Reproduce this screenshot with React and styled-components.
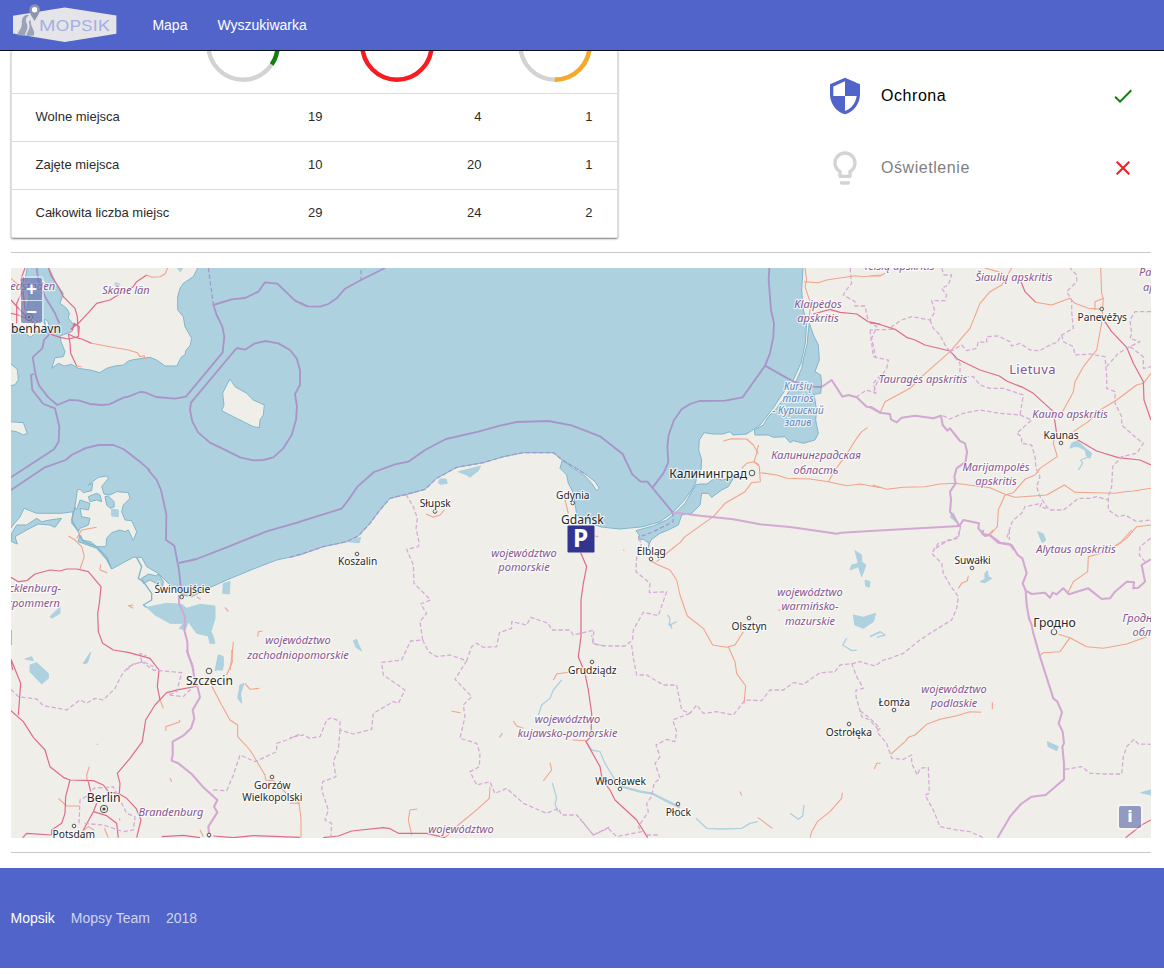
import React from 'react';
import styled, { createGlobalStyle } from 'styled-components';

const GlobalStyle = createGlobalStyle`
  *, *::before, *::after { box-sizing: border-box; }
  html, body { margin: 0; padding: 0; background: #fff; overflow: hidden; }
  body { font-family: "Liberation Sans", Arial, sans-serif; }
`;

const Page = styled.div`
  display: flex;
  flex-direction: column;
  height: 974px;
  overflow: hidden;
`;

const Header = styled.header`
  position: relative;
  z-index: 2;
  flex: none;
  display: flex;
  align-items: center;
  height: 51px;
  padding-left: 12px;
  background: #5164c9;
  border-bottom: 1px solid #0d0d14;
`;

const LogoSvg = styled.svg`
  display: block;
  width: 106px;
  height: 42px;
  margin: -5px 34.4px 0 0;
`;

const NavLink = styled.a`
  margin-right: 30px;
  color: #fff;
  font-size: 14px;
  line-height: 20px;
`;

const Content = styled.main`
  flex: none;
  width: 1140px;
  margin-left: 11px;
`;

const Details = styled.section`
  display: flex;
  justify-content: space-between;
  height: 201px;
`;

const Card = styled.div`
  width: 607px;
  height: 187px;
  border: 1px solid #dedede;
  border-top: 0;
  border-radius: 0 0 2px 2px;
  background: #fff;
  box-shadow: 0 1px 2px rgba(0, 0, 0, 0.5);
`;

const Row = styled.div`
  display: grid;
  grid-template-columns: 171px 116px 159px 111px;
  align-items: ${(p) => (p.$chart ? 'end' : 'center')};
  height: ${(p) => (p.$chart ? 42 : 48)}px;
  padding: 0 23px ${(p) => (p.$chart ? 12 : 2)}px 23.500px;
  border-top: ${(p) => (p.$chart ? 0 : '1px solid #dcdcdc')};
  color: #2b2b2b;
  font-size: 13px;
`;

const Value = styled.span`
  text-align: right;
`;

const RingCell = styled.div`
  display: flex;
  align-items: flex-end;
  justify-content: flex-end;
  height: 30px;
  padding-right: ${(p) => p.$inset}px;
`;

const RingSvg = styled.svg`
  flex: none;
  width: 74px;
  height: 74px;
  margin-bottom: -0.6px;
`;

const Features = styled.div`
  width: 340px;
  padding-top: 9px;
`;

const Feature = styled.div`
  display: flex;
  align-items: center;
  height: 72px;
  padding: 0 16.5px 0 13.5px;
  color: ${(p) => (p.$on ? '#000' : '#808080')};
  font-size: 16px;
  letter-spacing: 0.56px;
`;

const FeatureName = styled.span`
  flex: 1;
  margin-left: 16.5px;
`;

const Icon = styled.svg`
  display: block;
  width: ${(p) => p.$size}px;
  height: ${(p) => p.$size}px;
  fill: ${(p) => p.$color};
`;

const Rule = styled.hr`
  height: 1px;
  margin: 0;
  border: 0;
  background: #c9c9c9;
`;

const MapFrame = styled.section`
  position: relative;
  height: 570px;
  margin: 15px 0 14px;
  overflow: hidden;
`;

const MapSvg = styled.svg`
  display: block;
  width: 1140px;
  height: 570px;
  background: #f0eee9;
  font-family: "Noto Sans", "Open Sans", sans-serif;
`;

const Control = styled.div`
  position: absolute;
  display: flex;
  flex-direction: column;
  gap: 1px;
  padding: 2px;
  border-radius: 4px;
  background: rgba(255, 255, 255, 0.4);
  ${(p) => (p.$corner === 'top' ? 'left: 8px; top: 8px;' : 'right: 8px; bottom: 8px;')}
`;

const ControlButton = styled.button`
  width: ${(p) => p.$w || 21}px;
  height: 22px;
  padding: 0;
  border: 0;
  border-radius: ${(p) => p.$radius || '2px'};
  background: rgba(48, 63, 145, 0.5);
  color: #fff;
  font: bold ${(p) => (p.$font ? 16 : 18)}px/20px ${(p) => p.$font || '"Liberation Sans"'}, sans-serif;
`;

const Footer = styled.footer`
  flex: none;
  display: flex;
  align-items: center;
  gap: 16px;
  height: 100px;
  margin-top: 15px;
  padding-left: 10.5px;
  background: #5164c9;
  color: #d0d4ee;
  font-size: 14px;
`;

const FooterBrand = styled.span`
  color: #fff;
`;

const Land = styled.polygon`
  fill: #f0eee9;
  stroke: #82b6cb;
  stroke-width: 3;
`;
const Water = styled.polygon`
  fill: #add1df;
  stroke: ${(p) => (p.$shore ? '#7fb5ca' : '#add1df')};
  stroke-width: 3;
`;
const Line = styled.polyline`
  fill: none;
  stroke-linejoin: round;
`;
const River = styled(Line)`
  stroke: #add1df;
  stroke-width: ${(p) => p.$w || 4};
`;
const Motorway = styled(Line)`
  stroke: #df6b8b;
  stroke-width: 3.6;
`;
const Trunk = styled(Line)`
  stroke: #f1a389;
  stroke-width: 3.2;
`;
const SeaBorder = styled(Line)`
  stroke: #a994c9;
  stroke-width: 5.5;
`;
const LandBorder = styled(Line)`
  stroke: #d3a8d2;
  stroke-width: 6.2;
`;
const Region = styled(Line)`
  stroke: #d5aad7;
  stroke-width: 3.8;
  stroke-dasharray: 13 7;
`;

const MapText = styled.text`
  paint-order: stroke;
  stroke: rgba(255, 255, 255, 0.7);
  stroke-width: 2.4px;
  stroke-linejoin: round;
  text-anchor: ${(p) => p.$anchor || 'middle'};
  font-size: ${(p) => p.$size}px;
  font-style: ${(p) => (p.$italic ? 'italic' : 'normal')};
  fill: ${(p) => p.$color};
`;

const Town = styled.circle`
  fill: #f3f1ec;
  stroke: #555;
  stroke-width: 1;
`;

const PinLetter = styled.text`
  font: bold 24.5px "Noto Sans", "Open Sans", sans-serif;
  text-anchor: middle;
  fill: #fff;
`;

const LogoText = styled.text`
  font-family: Inter, Roboto, sans-serif;
  font-size: 14px;
  font-weight: 400;
  fill: #a3b1e2;
`;

const SEA =
  'M11 268H803L801.7 290L803.3 310L806.7 322L805.3 343L801 363L793.3 380L781.7 395L773.3 408L760 425L746.7 434L733 435L730 431.7L723 434L713 434L704 432.7L699.3 440L698.7 450L701.7 460L701 470L696.7 477L695.7 482.7L691.7 490L683 501.7L672.7 512.7L660 521.7L643 526.7L620 529L610 528L600 526.7L591.7 523.3L576.7 515L575 503L572.7 491.7L568.3 483.3L566.7 475L560 468.3L562.3 460L553.3 452.7L523.3 452.7L503.3 456.7L483.3 462.7L456.7 467.3L436.7 478.3L425 489.3L411.7 493.3L390 498.3L380 510L370 523.3L358.3 536L346.7 541.7L323.3 546.7L300 555L276.7 560L253.3 569L226.7 580L206.7 589L191.7 596.7L181.7 595L170 585L158.3 573.3L146.7 566.7L141.7 557.3L133.3 557.3L123.3 562.7L111.7 569L106.7 560L96.7 548.3L78.3 541.7L80 533.3L71.7 523.3L73 511.7L61.7 513.3L36.7 513.3L24 508.3L20 517L13 525L11 528Z';

const TILES = [
  {
    x: 0, y: 260,
    land: [
      '145,20 168,70 190,100 180,130 200,145 208,160 205,175 222,195 215,215 180,228 183,245 195,275 190,290 165,293 160,310 155,325 175,310 193,318 215,313 235,325 270,330 300,338 320,325 345,318 370,315 385,303 400,299 450,292 470,300 495,318 530,318 545,290 555,285 558,270 570,258 575,235 555,200 550,170 533,150 533,110 540,85 550,70 580,50 595,20',
      '30,20 82,20 75,60 88,110 80,150 110,185 125,180 140,200 110,215 92,232 70,215 30,195',
      '133,178 143,182 150,205 170,215 150,218 138,205',
      '30,310 52,328 55,360 45,374 30,378',
      '30,485 70,488 82,520 70,525 50,515 30,512',
      '690,357 705,380 740,400 760,420 793,435 790,465 780,480 778,503 760,500 700,470 665,452 672,435 668,400 680,375',
    ],
    water: ['533,24 548,24 541,36', '345,68 360,72 358,80 345,78'],
    red: [
      '145,24 155,50 172,75 190,110 225,145 232,170 235,220', '212,208 240,185 268,155 290,130 330,120 370,95 400,80 410,65 440,45',
      '205,222 225,232 245,237 275,250', '205,222 210,250 212,280 230,318', '130,215 180,232 205,237 235,230 238,200 222,190 217,212',
      '75,24 62,60 65,100 50,130 50,190', '33,120 60,150 90,180 100,190', '70,50 70,100 75,150', '33,160 55,165 110,190',
    ],
    orange: ['440,45 455,52 480,50 495,42 503,24', '275,250 330,260 385,270 412,278 420,290 433,287 433,297', '230,318 245,321', '33,55 60,80 62,100'],
    sea: [
      '110,24 115,60 135,110 165,160 178,190', '155,215 132,240 127,265 98,292 108,350 118,378 145,412 172,435 208,420 235,421 270,432 305,435 328,433 370,413 385,410 420,396 435,397 468,411 525,416 558,410 668,277 673,230 667,200 650,165 640,135 695,118 735,114 775,95 795,67 832,71 885,122 922,139',
      '102,342 93,345 97,390 130,432 165,445 178,500 176,545 162,568 33,652',
      '33,690 135,622 197,600 215,585 255,565 295,555 340,555 370,567 420,605 450,632',
      '710,264 735,269 765,250 797,243 835,250 870,270 890,295 900,330 900,375 885,402 891,440 888,480 875,525 850,565 820,592 790,600 760,601 720,592 680,572 630,548 595,518 577,485 570,450 573,428 710,264',
    ],
    seaDash: ['625,24 640,135'],
  },
  {
    x: 300, y: 260,
    sea: [
      '0,128 22,139 60,140 85,132 112,113 134,87 183,60 255,24',
      '0,785 125,746 145,720 172,680 222,636 285,613 325,605 375,570 438,537 535,515 600,497 650,486 745,483 815,496 902,530',
    ],
    seaDash: ['183,30 183,60'],
  },
  {
    x: 600, y: 260,
    shore: [
      '628,190 640,225 655,255 658,300 645,335 662,345 665,370 662,400 642,403 650,450 647,480 655,520 645,540 610,550 580,542 570,548 555,530 520,532 505,525 465,525 463,510 490,495 505,470 530,445 560,405 590,360 605,325 612,290 622,250 624,220',
      '287,675 300,672 320,672 345,655 365,660 400,655 385,680 365,690 335,712 325,700 305,700 300,735 275,760 245,765 235,795 200,812 180,820 155,838 148,850 130,838 115,838 118,825 108,812 160,798 200,780 225,760 255,730',
    ],
    red: ['640,162 690,148 720,157 770,162 805,185 842,193'],
    orange: [
      '615,24 620,60 615,80 625,110 632,130 628,170', '612,65 655,68 680,60 765,47 790,50 842,45', '370,543 395,536 440,537 460,555 472,575 462,605',
      '476,555 470,575 475,580', '462,605 478,620 481,665 455,668 435,695 375,730 340,770 255,830 240,848 212,870', '481,638 530,645 560,655 630,657 685,665 740,677 780,672 842,683',
      '685,665 705,630 735,590 770,535 785,515 803,503', '425,625 440,610 462,605 478,615',
    ],
    region: ['750,24 755,70 735,95 730,105 765,125 765,138 795,138 805,185 830,200 815,235 828,295', '842,345 820,370 828,400 800,390 770,410'],
    seaDash: ['218,757 220,785 160,815 115,832'],
    sea: ['0,529 68,582 97,643 122,665 142,665 218,757', '158,682 190,640 205,607 202,560 206,525 222,480 245,448 270,432 298,423 375,422 428,412 495,317 510,280 520,230 522,190 513,150 506,60 508,24', '495,317 580,365 640,380 665,381'],
    border: ['665,381 695,360 727,410 745,405 770,412 800,440 815,442 842,459', '218,757 300,767 400,778 480,793 570,801 680,817 710,821 725,818 812,813'],
  },
  {
    x: 870, y: 260,
    water: ['600,565 605,550 620,543 630,550 650,568 665,580 660,595 650,588 645,570 625,560 610,560', '503,815 520,822 527,840 518,848', '240,770 250,758 262,790'],
    river: ['658,590 632,600 638,610 625,630'],
    red: ['0,188 25,192 75,208 110,232 135,240 165,255 240,273 262,297 330,330 388,348 410,363 460,383 490,400 550,455 560,520', '453,65 465,95 497,127', '698,175 725,215 770,262 790,310 820,365 822,420 843,480', '620,538 680,573 745,593 810,600 843,615'],
    orange: [
      '30,460 45,425 120,385 155,350 240,275 300,205 330,130 360,95 395,75 425,24', '345,24 400,40', '0,48 30,48 45,40', '497,127 545,135 600,115 615,130 655,145 695,148',
      '692,24 695,100 700,115 675,125 675,150', '700,115 695,190 680,270 640,320 615,365 610,395 600,415 575,460', '843,340 820,370 800,375 740,420 690,450 655,485 610,515',
      '555,520 550,550 562,590 510,625 495,645 465,658 430,698 405,705 385,750 382,800 362,822', '8,675 50,688 100,682 165,680 210,672 255,670 360,683 405,703 435,712 530,705 583,675 615,697 735,700 765,695 790,693 843,685', '843,795 800,800 770,835 735,858',
    ],
    region: [
      '215,24 222,45 245,45 235,75 215,85 230,105 225,122 185,122 195,155 180,180 125,170 95,180 65,200 70,208 0,210', '180,180 190,205 210,225 225,255 240,275',
      '240,275 275,255 290,272 320,265 325,245 350,248 350,230 385,228 420,245 425,258 450,250 480,270 510,272 530,260 565,245 565,240 575,225 610,205 605,155 605,120 590,95 620,65 620,45 600,24',
      '575,225 580,245 610,260 615,285 660,282 705,290 710,350 710,385 735,395 735,430 755,470 755,495 800,535 820,550 800,580 755,590 728,620 725,680 715,710 715,750 745,770 765,765 800,785 843,780',
      '240,275 270,310 270,350 310,350 330,375 360,385 400,385 460,405 450,465 390,460 330,450 280,460 240,477 215,465', '450,465 485,480 440,520 455,530 455,550 485,555 495,590 498,625 510,650 500,680 510,710 530,740 540,750 580,750 600,735 625,715 660,715 680,710 715,720',
      '530,745 510,740 515,730 465,740 455,760 430,780 425,790 410,835', '843,155 795,155 780,180 785,220 780,235 810,245 780,260 745,280 710,320', '780,260 820,290 820,325 843,320', '0,210 10,290 55,300 50,325 20,370 10,400', '272,798 265,835 235,840 190,870',
    ],
    border: ['0,813 270,798', '0,441 30,458 60,462 63,478 80,487 95,473 135,467 190,475 213,467 218,495 232,512 240,505 270,543 285,550 291,575 287,605 260,625 253,650 257,670 240,695 243,720 240,755 255,775 268,798 280,780 327,790 325,805 345,828 360,825 390,848 420,853 432,870'],
  },
  {
    x: 0, y: 470,
    land: ['295,22 320,18 325,25 305,50 312,72 330,75 350,65 385,68 390,85 370,105 365,125 375,150 395,152 410,185 400,212 385,180 375,185 360,180 335,188 320,205 318,230 290,230 272,215 245,210 235,185 240,175 265,165 270,145 245,140 240,115 265,120 270,100 240,90 230,120 225,110 232,60 240,58 250,68 275,62 278,40 265,45'],
    water: ['335,117 355,120 355,140 335,138', '150,440 180,410 180,430 155,445', '250,580 272,547 260,580', '655,555 670,560 668,600 650,600', '670,340 690,335 688,372 668,370',
      '440,412 500,400 545,403 560,415 600,403 645,408 645,445 633,485 640,500 645,520 630,520 625,498 590,490 565,455 555,480 538,475 550,460 510,460 465,435'],
    shore: ['315,80 325,78 342,95 343,110 330,115 320,105', '35,190 50,165 80,165 110,145 125,155 150,150 185,145 165,172 150,165 115,162 80,180 45,200 52,222 35,215', '425,325 445,312 470,318 475,310 490,335 488,350 468,340 450,330 430,340', '290,70 300,75 305,95 290,90 270,95 265,80'],
    coast: ['410,262 425,290 415,325 430,335 455,370 455,390 430,405 440,412', '240,195 250,215 290,230 320,262 335,297', '225,110 215,150 235,185'],
    red: ['33,322 55,335 80,332 105,312 150,300 180,303 200,297 230,297 265,305 303,350 298,400 293,430 295,485 308,520 340,540 385,547 450,565 477,600', '33,480 33,525', '33,570 38,600'],
    orange: ['240,297 253,260 245,230 225,210 205,198', '230,205 245,180 290,172', '302,283 300,300 322,308', '400,405 385,407 400,415', '675,412 685,425', '773,500 775,485 788,483', '700,515 697,550 690,600', '590,380 602,388'],
    sea: ['445,0 470,30 483,60 499,133 498,210 523,227 537,300 545,375', '537,279 590,267 680,232 800,184 902,155'],
    border: ['537,375 537,400 555,440 553,480 562,515 563,550 578,590 580,602'],
    region: ['380,600 400,582 430,575 460,590'],
  },
  {
    x: 0, y: 650,
    water: ['90,45 110,38 145,70 145,85 125,102 90,65', '75,27 95,20 100,32', '250,40 272,8 262,38', '655,15 668,20 670,50 645,62', '720,105 732,100 722,130 725,160 713,145'],
    red: ['477,60 472,110 480,150', '595,108 540,118 500,128 465,165 437,210 427,275 390,325 352,370 360,400 358,430', '33,28 62,100 55,195', '33,182 70,215 100,262 135,300 150,350 190,382 210,390 280,392 310,405 325,425 358,432 380,445 408,475 423,510 410,563', '210,390 197,440 195,490 185,520 155,540 155,555', '68,563 80,550 155,555', '265,395 272,425', '290,460 280,485 250,540', '280,485 320,497 350,520 355,563', '485,560 550,556 600,563', '640,558 700,563 760,557 900,562'],
    orange: ['480,150 490,175', '268,350 260,375 262,395', '175,445 200,468 237,468', '282,540 265,530 245,545', '498,243 497,230 540,215 538,210', '510,385 515,395', '695,0 697,35 680,75', '635,108 665,165 690,210 713,225 713,260 750,300 765,325 795,375 797,390 820,392 880,450 900,460', '735,100 750,118 778,115', '600,540 610,560', '313,535 325,563', '358,505 360,512', '292,281 292,285'],
    region: ['33,118 55,140 110,147 130,167 200,180 240,150 260,160 285,145 310,150 345,115 365,75 385,50 425,35 460,60 545,68 530,125 505,135 550,140 575,115', '425,35 420,10 440,18', '640,420 680,422 700,375 720,315 765,335 830,305 830,280 860,270 900,252', '237,520 240,450 275,430 280,415 340,410 350,430 380,490 405,500 400,540 370,545 310,525 250,520'],
    border: ['560,0 578,50 583,85 592,108 600,142 578,180 583,205 573,235 550,257 518,275 518,315 515,332 535,340 575,372 610,412 652,450 642,470 652,487 625,530 628,563'],
  },
  {
    x: 290, y: 450,
    land: ['817,30 850,50 890,75 915,95 928,115 920,122 905,100 885,78 850,55'],
    water: ['505,65 572,48 565,62 540,82 530,75', '445,98 450,87 468,87 472,100 450,103', '172,275 212,262 208,278', '190,572 200,568 205,583 215,603 198,592'],
    river: ['815,690 790,720 780,745 755,765 745,795', '888,875 905,900 930,905 945,940 960,965', '787,998 800,1045 795,1060 803,1085'],
    red: ['872,308 890,350 880,400 873,450 873,560 865,620 885,670 895,720 905,790 903,860 888,875 930,950 937,990 960,1020', '100,1163 145,1158 185,1143 280,1133 300,1136 325,1150 410,1150 465,1163'],
    orange: ['408,192 430,202 450,195 463,180', '825,150 835,190', '790,690 800,672 835,667', '485,784 512,788', '670,813 680,828 700,835', '637,850 628,862', '780,938 785,960 760,993', '848,870 888,872', '0,1060 27,1060 33,1105 33,1163', '382,1077 360,1080 355,1110 365,1155', '600,1010 598,1045 565,1075 505,1125 465,1163', '915,258 925,260'],
    seaDash: ['0,322 40,310 100,290 170,275 205,258 240,220 270,180 300,145 348,133 405,118 440,85 500,52 580,38 640,20 700,8 790,8 817,30 890,75'],
    region: [
      '348,133 370,170 382,205 378,235 388,280 385,290 350,298 370,345 372,400 422,450 392,462 410,490 390,515 398,570 362,573 335,630 275,637 280,675 345,720 325,760 310,755 250,790 245,838 190,852 150,840 150,815 125,803 110,810 90,860 60,865 40,855 0,863',
      '398,570 415,605 440,620 480,615 530,632 545,590 560,580 580,592 620,590 628,548 665,535 665,515 710,525 722,502 775,520 785,540 840,540 850,555 912,540 908,580 950,590',
      '530,632 495,688 545,740 520,765 525,800 510,865 560,880 570,910 568,950 540,965 560,1005 600,995 615,1030 650,1015 700,1060 770,1090 805,1075 815,1095 860,1095 910,1155 960,1130',
      '150,840 145,900 130,935 138,980 98,995 95,1020 115,1080 105,1110 125,1120 123,1163',
    ],
  },
  {
    x: 580, y: 530,
    water: ['825,62 845,75 845,95 858,105 845,140 835,110 810,120 815,105 835,100', '855,150 870,155 868,172 857,168', '820,255 850,262 887,250 880,275 850,295 825,285', '265,283 275,283 273,290'],
    river: ['262,255 270,265 268,280 276,296', '272,284 290,275', '800,325 788,345 815,362 830,360', '630,850 655,868 668,858 672,825', '90,725 105,750', '348,865 380,895 420,897 485,895 510,880 533,875', '870,320 900,307'],
    wide: ['120,768 180,785 215,790 250,808 300,832'],
    red: ['90,780 105,810 170,870 203,923'],
    orange: ['272,60 230,95', '212,92 235,105 270,120 290,150 300,195 322,258 370,295 398,345 440,352 465,345 490,305', '445,350 465,395 470,430 497,468 492,520', '595,240 602,240', '480,785 485,797', '533,862 577,895', '690,923 695,905 712,875 750,845 785,805 787,788', '130,60 133,62'],
    coast: ['205,55 208,38'],
    region: [
      '175,25 185,40 170,80 168,125 210,160 208,188 260,185 235,257 190,247 160,300 158,330 135,348 80,348 40,342 35,315',
      '155,345 160,385 170,435 200,435 250,465 290,465 305,540 330,550 350,525 370,550 410,545 460,555 495,510 545,512 570,480 610,480 640,458 670,463 720,428 765,425 780,405 820,400 840,395',
      '330,550 278,570 290,605 285,635 260,628 228,645 240,680 225,700 240,745 222,760 215,800 200,820 205,845 175,890 185,905 110,920 85,895 40,915 0,865',
      '815,400 830,440 850,475 828,480 828,500 845,560 870,570 900,605', '200,915 240,915',
    ],
  },
  {
    x: 860, y: 530,
    water: ['535,8 548,15 556,30 545,35', '375,130 382,122 385,140 395,145 375,158 360,155 375,148', '562,635 595,650 590,662 565,650', '842,788 872,780 872,795'],
    river: ['30,320 60,305 75,315 50,322'],
    red: ['797,923 845,885 872,870'],
    orange: ['400,0 388,12', '815,0 780,40 740,65 685,80 683,125 640,155 623,190', '595,313 630,323 680,350 730,355 800,342 860,320', '630,323 600,365 550,368 537,380', '325,137 322,152 305,160 295,175', '92,673 135,635 145,622 165,615 200,583 240,568 290,557 330,545 363,547', '397,517 397,538', '43,717 50,700 62,700'],
    region: [
      '300,0 290,22 275,30 235,40 215,70 245,100 250,130 270,165 295,200 290,235 275,270 210,310 180,330 130,370 90,385 70,390 45,408 0,395',
      '0,542 30,565 60,595 50,605 80,640 95,685 130,688 155,675 155,700 172,735 180,715 205,712 208,790 195,795 220,840 240,890 290,900 330,905 368,922',
      '615,718 665,710 690,730 740,732 785,732 790,680 800,650 822,628 835,642 872,643', '872,25 840,50 838,75 855,95', '448,0 448,30',
    ],
    border: ['370,0 367,12 388,15 415,38 455,45 473,75 487,85 500,130 488,160 497,182', '497,182 515,192 555,188 570,203 578,188 590,193 610,175 627,193 685,175 700,187 725,207 750,205 765,185 800,155 822,157 820,175 835,173 855,155 845,105 872,88', '497,182 500,225 507,265 515,285 520,310 540,380 580,505 592,515 606,547 596,580 608,605 612,640 607,650 612,700 612,748 557,795 515,800 483,822 450,860 413,923'],
  },
];

const PURPLE = '#86578f';
const INK = '#282828';

const REGIONS = [
  ['Skåne län', 126, 294], ['Klaipėdos', 818, 308], ['apskritis', 818, 322], ['Telšių apskritis', 899, 270],
  ['Šiaulių apskritis', 1014, 281], ['Tauragės apskritis', 923, 383], ['Kauno apskritis', 1070, 418],
  ['Marijampolės', 996, 471], ['apskritis', 996, 485], ['Калининградская', 816, 459], ['область', 816, 474],
  ['Alytaus apskritis', 1076, 553], ['województwo', 524, 557], ['pomorskie', 524, 571],
  ['województwo', 298, 644], ['zachodniopomorskie', 298, 659], ['województwo', 567.5, 723],
  ['kujawsko-pomorskie', 567.5, 737], ['województwo', 810, 596], ['warmińsko-', 810, 610], ['mazurskie', 810, 625],
  ['województwo', 954, 693], ['podlaskie', 954, 707], ['województwo', 461, 833], ['Brandenburg', 171, 816],
  ['Hovedstaden', 55, 290, 'end'], ['Panevėžio', 1139, 276, 'start'], ['apskritis', 1143, 291, 'start'],
  ['Гродненская', 1122.5, 622, 'start'], ['область', 1132.5, 636, 'start'],
  ['Mecklenburg-', 61, 592, 'end'], ['Vorpommern', 60, 607, 'end'],
];

const CITIES = [
  ['København', 61, 333, 12.2, 'end'], ['Калининград', 708.2, 478, 12.1], ['Gdańsk', 582.4, 524, 12.1], ['Szczecin', 209.4, 685, 12.1],
  ['Гродно', 1054.4, 627, 12.2], ['Berlin', 103.7, 802, 12.2], ['Panevėžys', 1102.3, 321], ['Kaunas', 1061, 439],
  ['Gdynia', 572.8, 499], ['Elbląg', 651.3, 555], ['Słupsk', 435.2, 507], ['Koszalin', 357.6, 565], ['Świnoujście', 182.3, 593],
  ['Grudziądz', 592.3, 674], ['Olsztyn', 749.2, 630], ['Ostrołęka', 848.8, 736], ['Łomża', 894.2, 706], ['Suwałki', 972.6, 564],
  ['Potsdam', 73.8, 838], ['Gorzów', 272.3, 789], ['Wielkopolski', 272.3, 801], ['Włocławek', 620.5, 785], ['Płock', 678.3, 816],
];

const LAGOON = [['Kuršių', 798, 389.5], ['marios', 798, 402], ['- Куршский', 798, 414], ['залив', 798, 426]];

const TOWNS = [
  [1101.7, 309], [1061, 443], [572.7, 503], [651, 559], [435, 511.5], [357, 554], [181.7, 597], [592, 662], [749, 618],
  [849, 724], [894, 710], [972, 568], [74, 826], [272, 777], [620, 789], [678, 804], [752, 473, 2.8], [209, 671, 2.8],
  [1054, 632, 2.8], [209, 835],
];

const draw = (Shape, list, extra) => (list || []).map((points) => <Shape key={points} points={points} {...extra} />);

const Tile = ({ tile }) => (
  <g transform={`translate(${tile.x} ${tile.y}) scale(0.33333)`}>
    {draw(Land, tile.land)}
    {draw(Water, tile.water)}
    {draw(Water, tile.shore, { $shore: true })}
    {draw(River, tile.river)}
    {draw(River, tile.wide, { $w: 7 })}
    {draw(River, tile.coast, { style: { stroke: '#7fb5ca' } })}
    {draw(Trunk, tile.orange)}
    {draw(Motorway, tile.red)}
    {draw(Region, tile.region)}
    {draw(Region, tile.seaDash, { style: { stroke: '#a398cb' } })}
    {draw(LandBorder, tile.border)}
    {draw(SeaBorder, tile.sea)}
  </g>
);

const BalticMap = () => (
  <MapSvg viewBox="11 268 1140 570">
    <path d={SEA} fill="#add1df" />
    <path d={SEA.replace('M11 268H803L', 'M803 268L').replace('Z', '')} fill="none" stroke="#82b6cb" strokeWidth="1" />
    {TILES.map((tile) => <Tile key={`${tile.x}-${tile.y}`} tile={tile} />)}
    {TOWNS.map(([x, y, r]) => <Town key={`${x}-${y}`} cx={x} cy={y} r={r || 1.8} />)}
    <Town cx="29" cy="317" r="3.5" />
    <circle cx="29" cy="317" r="1.5" fill="#444" />
    <Town cx="104" cy="809" r="3.7" />
    <circle cx="104" cy="809" r="1.6" fill="#444" />
    {REGIONS.map(([t, x, y, a]) => (
      <MapText key={t + x + y} x={x} y={y} $size={11} $italic $anchor={a} $color={PURPLE}>{t}</MapText>
    ))}
    {LAGOON.map(([t, x, y]) => (
      <MapText key={t} x={x} y={y} $size={10} $italic $color="#6385b8">{t}</MapText>
    ))}
    {CITIES.map(([t, x, y, s, a]) => (
      <MapText key={t} x={x} y={y} $size={s || 10.2} $anchor={a} $color={INK}>{t}</MapText>
    ))}
    <MapText x="1032.5" y="373.5" $size={13} $color={PURPLE} letterSpacing="0.35">Lietuva</MapText>
    <rect x="567.5" y="525.5" width="27" height="27" rx="1" fill="#333390" />
    <PinLetter x="580.7" y="547.4">P</PinLetter>
  </MapSvg>
);

const Logo = () => (
  <LogoSvg viewBox="12 2 106 42">
    <path d="M13 15.7L64.7 7.4L116.4 15.4V33.7L64.7 42L13 33.4Z" fill="#e5e5e9" />
    <path d="M25.5 15C20.5 18 22.5 22 21.5 26C21 29.5 17.5 32 17.5 35L24.5 36C26 31 29 28 26.5 23C25 20 26 17 29.5 15Z" fill="#9ba2b8" />
    <path d="M30.5 20C27.5 21 30 24 29.5 27C29 31 26 33 26.5 36L34 35.5C35 31 32 28 31 24Z" fill="#9ba2b8" />
    <path d="M34.6 21C32 16.500 29.300 13.500 29.300 9.500A5.300 5.300 0 0 1 39.900 9.500C39.900 13.500 37 16.500 34.600 21Z" fill="#8c95ac" />
    <circle cx="34.600" cy="9.700" r="2.700" fill="#fff" />
    <LogoText x="39" y="31" textLength="71" lengthAdjust="spacingAndGlyphs">MOPSIK</LogoText>
  </LogoSvg>
);

const RADIUS = 34.7;
const LENGTH = 2 * Math.PI * RADIUS;

const Ring = ({ share, color, inset }) => (
  <RingCell $inset={inset}>
    <RingSvg viewBox="0 0 74 74">
      <g fill="none" strokeWidth="4.4" transform="rotate(-90 37 37)">
        <circle cx="37" cy="37" r={RADIUS} stroke="#d3d3d3" />
        <circle cx="37" cy="37" r={RADIUS} stroke={color} strokeDasharray={`${share * LENGTH} ${LENGTH}`} />
      </g>
    </RingSvg>
  </RingCell>
);

const STATS = [
  ['Wolne miejsca', 19, 4, 1],
  ['Zajęte miejsca', 10, 20, 1],
  ['Całkowita liczba miejsc', 29, 24, 2],
];

const SHIELD = 'M12 1L3 5v6c0 5.550 3.840 10.740 9 12 5.160-1.260 9-6.450 9-12V5l-9-4zm0 10.990h7c-.53 4.120-3.280 7.790-7 8.940V12H5V6.300l7-3.110v8.800z';
const BULB = 'M9 21c0 .55.45 1 1 1h4c.55 0 1-.45 1-1v-1H9v1zm3-19C8.140 2 5 5.140 5 9c0 2.380 1.190 4.470 3 5.740V17c0 .55.45 1 1 1h6c.55 0 1-.45 1-1v-2.260c1.810-1.270 3-3.360 3-5.740 0-3.860-3.140-7-7-7zm2.850 11.100l-.85.6V16h-4v-2.300l-.85-.6C7.800 12.160 7 10.630 7 9c0-2.760 2.240-5 5-5s5 2.240 5 5c0 1.630-.8 3.160-2.150 4.100z';
const CHECK = 'M9 16.170L4.830 12l-1.420 1.410L9 19 21 7l-1.410-1.410z';
const CROSS = 'M19 6.410L17.590 5 12 10.590 6.410 5 5 6.410 10.590 12 5 17.590 6.410 19 12 13.410 17.590 19 19 17.590 13.410 12z';

const Glyph = ({ d, size, color }) => (
  <Icon viewBox="0 0 24 24" $size={size} $color={color}><path d={d} /></Icon>
);

export default function App() {
  return (
    <Page>
      <GlobalStyle />
      <Header>
        <Logo />
        <NavLink>Mapa</NavLink>
        <NavLink>Wyszukiwarka</NavLink>
      </Header>
      <Content>
        <Details>
          <Card>
            <Row $chart>
              <span />
              <Ring share={10 / 29} color="#118011" inset={42.3} />
              <Ring share={1} color="#fb1a1f" inset={48} />
              <Ring share={0.5} color="#f9a825" inset={0.2} />
            </Row>
            {STATS.map(([name, ...values]) => (
              <Row key={name}>
                <span>{name}</span>
                {values.map((v, i) => <Value key={i}>{v}</Value>)}
              </Row>
            ))}
          </Card>
          <Features>
            <Feature $on>
              <Glyph d={SHIELD} size={40} color="#5164c9" />
              <FeatureName>Ochrona</FeatureName>
              <Glyph d={CHECK} size={24} color="#118011" />
            </Feature>
            <Feature>
              <Glyph d={BULB} size={40} color="#d3d3d3" />
              <FeatureName>Oświetlenie</FeatureName>
              <Glyph d={CROSS} size={24} color="#fb1a1f" />
            </Feature>
          </Features>
        </Details>
        <Rule />
        <MapFrame>
          <BalticMap />
          <Control $corner="top">
            <ControlButton $radius="2px 2px 0 0">+</ControlButton>
            <ControlButton $radius="0 0 2px 2px">−</ControlButton>
          </Control>
          <Control $corner="bottom">
            <ControlButton $w={22} $font='"DejaVu Sans"'>i</ControlButton>
          </Control>
        </MapFrame>
        <Rule />
      </Content>
      <Footer>
        <FooterBrand>Mopsik</FooterBrand>
        <span>Mopsy Team</span>
        <span>2018</span>
      </Footer>
    </Page>
  );
}
